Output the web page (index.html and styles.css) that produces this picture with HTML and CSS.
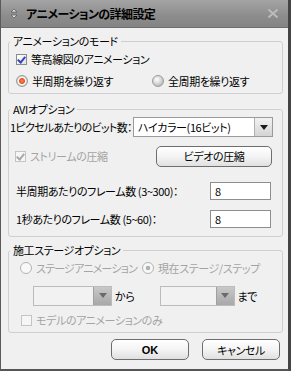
FILE: index.html
```html
<!DOCTYPE html>
<html lang="ja">
<head>
    <meta charset="UTF-8">
    <title>アニメーションの詳細設定</title>
    <link rel="stylesheet" href="styles.css">
</head>
<body>
    <div class="window">
        <div class="titlebar">
            <svg class="title-icon" width="8" height="11" viewBox="0 0 8 11">
                <path d="M1 4 L4 1 L7 4 Z M1 7 L4 10 L7 7 Z" fill="#e8e8e8" stroke="#5a5a5a" stroke-width="0.8"/>
            </svg>
            <span class="title">アニメーションの詳細設定</span>
            <svg class="close" width="12" height="11" viewBox="0 0 12 11">
                <path d="M2 2 L10 9 M10 2 L2 9" stroke="#bdbdbd" stroke-width="1.8" stroke-linecap="round"/>
            </svg>
        </div>

        <div class="content">
            <fieldset class="group mode">
                <legend>アニメーションのモード</legend>
                <div class="row indent">
                    <span class="check checked"></span>等高線図のアニメーション
                </div>
                <div class="row indent">
                    <span class="opt half"><span class="radio on"></span>半周期を繰り返す</span>
                    <span class="opt"><span class="radio"></span>全周期を繰り返す</span>
                </div>
            </fieldset>

            <fieldset class="group avi">
                <legend>AVIオプション</legend>
                <div class="row bits">
                    <span class="label">1ピクセルあたりのビット数：</span>
                    <span class="combo wide">
                        <span class="combo-text">ハイカラー(16ビット)</span>
                        <span class="combo-arrow"></span>
                    </span>
                </div>
                <div class="row indent-s stream">
                    <span class="opt disabled"><span class="check checked off"></span>ストリームの圧縮</span>
                    <span class="button video">ビデオの圧縮</span>
                </div>
                <div class="row indent frames-1">
                    <span class="label">半周期あたりのフレーム数 (3~300)：</span>
                    <span class="field">8</span>
                </div>
                <div class="row indent frames-2">
                    <span class="label">1秒あたりのフレーム数 (5~60)：</span>
                    <span class="field">8</span>
                </div>
            </fieldset>

            <fieldset class="group stage">
                <legend>施工ステージオプション</legend>
                <div class="row stage-radios disabled">
                    <span class="opt anim"><span class="radio off"></span>ステージアニメーション</span>
                    <span class="opt"><span class="radio off dot"></span>現在ステージ/ステップ</span>
                </div>
                <div class="row range">
                    <span class="combo off from"><span class="combo-text"></span><span class="combo-arrow"></span></span>
                    <span class="range-label">から</span>
                    <span class="combo off to"><span class="combo-text"></span><span class="combo-arrow"></span></span>
                    <span class="range-label">まで</span>
                </div>
                <div class="row model disabled">
                    <span class="check off"></span>モデルのアニメーションのみ
                </div>
            </fieldset>

            <div class="actions">
                <span class="button ok">OK</span>
                <span class="button">キャンセル</span>
            </div>
        </div>
    </div>
</body>
</html>
```

FILE: styles.css
```css
body {
    margin: 0;
    font-family: 'Noto Sans CJK JP', 'Noto Sans', sans-serif;
    font-size: 11px;
    letter-spacing: -0.4px;
    font-feature-settings: "palt";
    color: #000000;
    background-color: #f0f0f0;
}
.window {
    width: 291px;
    height: 371px;
    box-sizing: border-box;
    border-left: 1px solid #5a5a5a;
    border-right: 3px solid #444444;
    border-bottom: 2px solid #555555;
    background-color: #f0f0f0;
    overflow: hidden;
}
.titlebar {
    height: 28px;
    box-sizing: border-box;
    display: flex;
    align-items: center;
    padding: 0 8px 0 9px;
    background: linear-gradient(#a4a4a4, #8c8c8c 60%, #848484);
    border-bottom: 1px solid #6c6c6c;
}
.title-icon {
    margin-right: 8px;
}
.title {
    font-weight: bold;
    font-size: 12px;
    letter-spacing: -0.6px;
    flex: 1;
}
.close {
    margin-right: 1px;
}
.content {
    padding: 6px 5px 0 7px;
}
.group {
    margin: 0;
    padding: 0;
    min-width: 0;
    border: 1px solid #cfcfcf;
    border-radius: 3px;
}
.group legend {
    padding: 0 3px;
    margin-left: 1px;
    line-height: 14px;
}
.avi {
    margin-top: 8px;
}
.stage {
    margin-top: 6px;
}
.row {
    display: flex;
    align-items: center;
    height: 22px;
    white-space: nowrap;
}
.indent {
    padding-left: 7px;
}
.indent-s {
    padding-left: 6px;
}
.mode {
    padding-bottom: 1px;
}
.opt {
    display: flex;
    align-items: center;
    flex: none;
}
.half {
    width: 136px;
}
.check {
    width: 11px;
    height: 11px;
    box-sizing: border-box;
    border: 1px solid #8c8c8c;
    background: linear-gradient(135deg, #ffffff, #e2e2e2);
    margin-right: 4px;
    flex: none;
    position: relative;
}
.check.checked::after {
    content: "";
    position: absolute;
    left: 2px;
    top: 0;
    width: 3px;
    height: 6px;
    border: solid #3348b8;
    border-width: 0 2px 2px 0;
    transform: rotate(40deg);
}
.check.off {
    border-color: #c4c4c4;
    background: #f6f6f6;
}
.check.checked.off::after {
    border-color: #a8a8a8;
}
.radio {
    width: 12px;
    height: 12px;
    box-sizing: border-box;
    border-radius: 50%;
    border: 1px solid #9a9a9a;
    background: radial-gradient(circle at 40% 35%, #ffffff, #cfcfcf 55%, #a2a2a2);
    margin-right: 4px;
    flex: none;
}
.radio.on {
    background: radial-gradient(circle, #ff8a50 0, #e8501c 2.5px, #ffffff 3.5px, #f0f0f0 4px, #c8c8c8 5px);
}
.radio.off {
    border-color: #b4b4b4;
    background: #f8f8f8;
}
.radio.off.dot {
    background: radial-gradient(circle, #b0b0b0 0, #b0b0b0 2px, #f8f8f8 2.6px);
}
.disabled {
    color: #a4a4a4;
}
.avi {
    padding-bottom: 6px;
}
.bits {
    padding-left: 1px;
}
.label {
    flex: none;
}
.bits .label {
    width: 123px;
    letter-spacing: -0.7px;
}
.combo {
    display: flex;
    flex: none;
    height: 20px;
    box-sizing: border-box;
    border: 1px solid #9a9a9a;
    background-color: #ffffff;
}
.combo.wide {
    width: 140px;
}
.combo-text {
    flex: 1;
    padding-left: 4px;
    line-height: 18px;
}
.combo-arrow {
    width: 17px;
    border-left: 1px solid #b0b0b0;
    background: linear-gradient(#f2f2f2, #d4d4d4);
    display: flex;
    align-items: center;
    justify-content: center;
}
.combo-arrow::after {
    content: "";
    border-style: solid;
    border-width: 5px 4px 0 4px;
    border-color: #1a1a1a transparent transparent transparent;
}
.combo.off {
    border-color: #bcbcbc;
    background-color: #f2f2f2;
}
.combo.off .combo-arrow {
    background: linear-gradient(#c8c8c8, #a8a8a8);
    border-left-color: #a0a0a0;
}
.combo.off .combo-arrow::after {
    border-top-color: #6a6a6a;
}
.stream {
    margin-top: 7px;
}
.stream .opt {
    width: 141px;
}
.button {
    display: flex;
    align-items: center;
    justify-content: center;
    flex: none;
    height: 21px;
    box-sizing: border-box;
    border: 1px solid #6e6e6e;
    border-radius: 5px;
    background: linear-gradient(#ffffff, #f4f4f4 50%, #e0e0e0);
}
.button.video {
    width: 116px;
}
.frames-1 {
    margin-top: 13px;
}
.frames-2 {
    margin-top: 6px;
}
.frames-1 .label,
.frames-2 .label {
    width: 194px;
}
.field {
    width: 61px;
    height: 18px;
    box-sizing: border-box;
    border: 1px solid #8e8e8e;
    background-color: #ffffff;
    padding-left: 4px;
    line-height: 16px;
}
.stage {
    padding-bottom: 1px;
}
.stage-radios {
    padding-left: 11px;
}
.anim {
    width: 122px;
    letter-spacing: -0.8px;
}
.range {
    margin-top: 5px;
    height: 23px;
    padding-left: 24px;
}
.combo.from {
    width: 79px;
}
.combo.to {
    width: 75px;
}
.range-label {
    margin-left: 3px;
    width: 47px;
}
.model {
    margin-top: 2px;
    padding-left: 12px;
}
.actions {
    display: flex;
    justify-content: flex-end;
    gap: 13px;
    margin-top: 6px;
    padding-right: 3px;
}
.actions .button {
    width: 78px;
    height: 21px;
}
.button.ok {
    font-weight: bold;
    font-family: 'Liberation Sans', sans-serif;
    letter-spacing: 0;
}
```
